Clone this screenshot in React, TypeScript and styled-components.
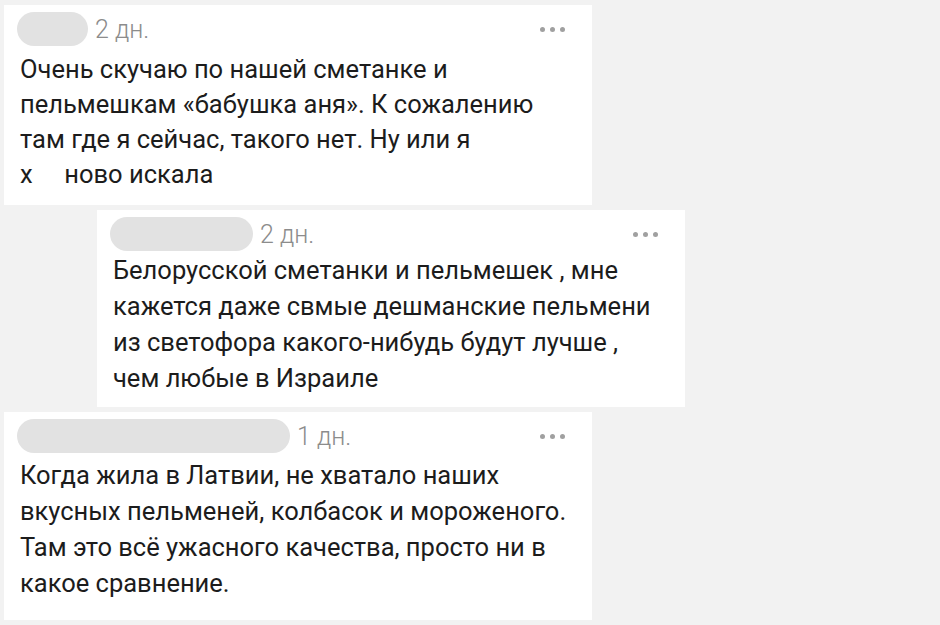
import styled, { createGlobalStyle } from 'styled-components'

const GlobalStyle = createGlobalStyle`
  html, body {
    margin: 0;
    padding: 0;
    background: #f2f2f2;
  }
  body {
    font-family: Roboto, 'Noto Sans', 'Liberation Sans', sans-serif;
    -webkit-font-smoothing: antialiased;
  }
`

const Page = styled.div`
  width: 940px;
  height: 625px;
  box-sizing: border-box;
  padding-top: 5px;
  display: flex;
  flex-direction: column;
  gap: 5px;
  overflow: hidden;
`

const Card = styled.div<{ $indent: number; $gap: number; $tail: number }>`
  width: 588px;
  margin-left: ${props => props.$indent}px;
  box-sizing: border-box;
  padding: 7px 27px ${props => props.$tail}px 13px;
  background: #ffffff;
  display: flex;
  flex-direction: column;
  gap: ${props => props.$gap}px;
`

const Header = styled.div`
  display: flex;
  align-items: center;
  height: 34px;
`

const NamePill = styled.div<{ $width: number }>`
  width: ${props => props.$width}px;
  height: 100%;
  border-radius: 17px;
  background: #e2e2e2;
  flex-shrink: 0;
`

const Time = styled.span`
  margin-left: 7px;
  font-size: 25px;
  font-weight: 300;
  color: #8c8c8c;
  line-height: 1;
`

const Menu = styled.div`
  margin-left: auto;
  display: flex;
  gap: 5px;
  align-items: center;
`

const Dot = styled.span`
  width: 5px;
  height: 5px;
  border-radius: 50%;
  background: #a0a0a0;
`

const Body = styled.p<{ $leading: number }>`
  margin: 0;
  padding-left: 3px;
  font-size: 25.5px;
  line-height: ${props => props.$leading}px;
  color: #1c1c1c;
  white-space: pre;
`

interface Comment {
  pill: number
  time: string
  indent: number
  gap: number
  leading: number
  tail: number
  lines: string[]
}

const comments: Comment[] = [
  {
    pill: 71,
    time: '2 дн.',
    indent: 4,
    gap: 6,
    leading: 35,
    tail: 13,
    lines: [
      'Очень скучаю по нашей сметанке и',
      'пельмешкам «бабушка аня». К сожалению',
      'там где я сейчас, такого нет. Ну или я',
      'х     ново искала',
    ],
  },
  {
    pill: 143,
    time: '2 дн.',
    indent: 97,
    gap: 1,
    leading: 36,
    tail: 11,
    lines: [
      'Белорусской сметанки и пельмешек , мне',
      'кажется даже свмые дешманские пельмени',
      'из светофора какого-нибудь будут лучше ,',
      'чем любые в Израиле',
    ],
  },
  {
    pill: 273,
    time: '1 дн.',
    indent: 4,
    gap: 4,
    leading: 36,
    tail: 19,
    lines: [
      'Когда жила в Латвии, не хватало наших',
      'вкусных пельменей, колбасок и мороженого.',
      'Там это всё ужасного качества, просто ни в',
      'какое сравнение.',
    ],
  },
]

export default function App() {
  return (
    <>
      <GlobalStyle />
      <Page>
        {comments.map((c, i) => (
          <Card key={i} $indent={c.indent} $gap={c.gap} $tail={c.tail}>
            <Header>
              <NamePill $width={c.pill} />
              <Time>{c.time}</Time>
              <Menu>
                <Dot />
                <Dot />
                <Dot />
              </Menu>
            </Header>
            <Body $leading={c.leading}>{c.lines.join('\n')}</Body>
          </Card>
        ))}
      </Page>
    </>
  )
}
